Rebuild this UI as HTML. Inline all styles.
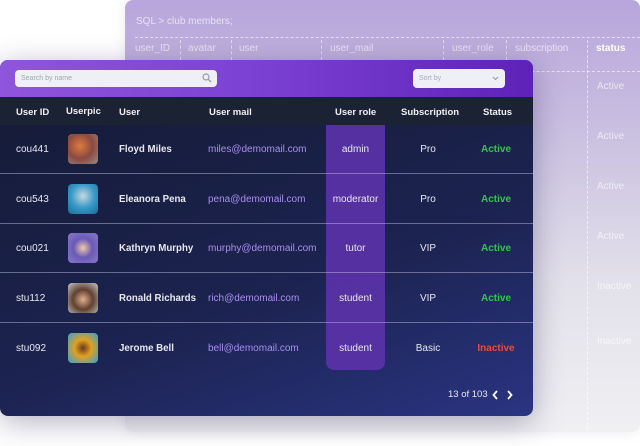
<!DOCTYPE html>
<html><head><style>
*{margin:0;padding:0;box-sizing:border-box}
body{width:640px;height:446px;background:#fff;position:relative;overflow:hidden;font-family:"Liberation Sans",sans-serif}
.bg{position:absolute;left:125px;top:0;width:515px;height:432px;border-radius:8px;background:linear-gradient(180deg,#b8a5dc 0%,#c9bfe0 30%,#e2e0ea 65%,#f0f0f3 100%);box-shadow:0 0 12px rgba(120,110,150,.15)}
.bg .t{position:absolute;font-size:10px;color:rgba(255,255,255,.65)}
.dash{position:absolute;left:10px;right:0;border-top:1px dashed rgba(255,255,255,.6)}
.vd{position:absolute;border-left:1px dashed rgba(255,255,255,.6)}
.card{position:absolute;left:0;top:60px;width:533px;height:356px;border-radius:8px;overflow:hidden;background:linear-gradient(160deg,#141a33 0%,#1c2350 60%,#2a3482 100%);box-shadow:0 6px 30px rgba(40,30,80,.35)}
.top{height:37px;background:linear-gradient(90deg,#8f55dc,#7a40d2 50%,#5d22b8)}
.search{position:absolute;left:15px;top:10px;width:202px;height:17px;background:#eef0f6;border-radius:4px;font-size:7px;color:#9aa;padding:5px 6px;line-height:8px}
.sort{position:absolute;left:413px;top:9px;width:92px;height:19px;background:#eef0f6;border-radius:4px;font-size:7px;color:#aab;padding:6px 6px;line-height:8px}
.head{position:absolute;top:37px;left:0;width:533px;height:28px;background:#1a2234}
.role{position:absolute;left:326px;top:65px;width:59px;height:245px;background:#5a32a8;border-radius:0 0 8px 8px;opacity:.92}
.c{position:absolute;font-size:10px;color:#e8e8f0;white-space:nowrap}
.h{font-weight:bold;font-size:9.5px;color:#f0f0f5}
.b{font-weight:bold;font-size:9.7px}
.line{position:absolute;left:0;width:533px;height:1px;background:rgba(200,200,230,.45)}
.av{position:absolute;left:68px;width:30px;height:30px;border-radius:4px}
</style></head><body>
<div class="bg">
<div class="t" style="left:11px;top:16px">SQL &gt; club members;</div>
<div class="dash" style="top:37px"></div>
<div class="dash" style="top:71px"></div>
<div class="t" style="left:10px;top:43px">user_ID</div>
<div class="t" style="left:63px;top:43px">avatar</div>
<div class="t" style="left:114px;top:43px">user</div>
<div class="t" style="left:205px;top:43px">user_mail</div>
<div class="t" style="left:327px;top:43px">user_role</div>
<div class="t" style="left:390px;top:43px">subscription</div>
<div class="t" style="left:471px;top:43px;font-weight:bold;color:#fff">status</div>
<div class="vd" style="left:462px;top:40px;height:390px"></div>
<div class="vd" style="left:55px;top:40px;height:20px"></div>
<div class="vd" style="left:106px;top:40px;height:20px"></div>
<div class="vd" style="left:196px;top:40px;height:20px"></div>
<div class="vd" style="left:318px;top:40px;height:20px"></div>
<div class="vd" style="left:381px;top:40px;height:20px"></div>
<div class="t" style="left:472px;top:81px">Active</div>
<div class="t" style="left:472px;top:131px">Active</div>
<div class="t" style="left:472px;top:181px">Active</div>
<div class="t" style="left:472px;top:231px">Active</div>
<div class="t" style="left:472px;top:281px">Inactive</div>
<div class="t" style="left:472px;top:336px">Inactive</div>
</div>
<div class="card">
<div class="top"></div>
<div class="search">Search by name<svg style="position:absolute;right:5px;top:3px" width="10" height="10" viewBox="0 0 10 10"><circle cx="4" cy="4" r="3" fill="none" stroke="#99a" stroke-width="1.2"/><path d="M6.3 6.3L9 9" stroke="#99a" stroke-width="1.3"/></svg></div>
<div class="sort">Sort by<svg style="position:absolute;right:6px;top:7px" width="7" height="5" viewBox="0 0 7 5"><path d="M1 1l2.5 2.5L6 1" fill="none" stroke="#99a" stroke-width="1.1"/></svg></div>
<div class="head"></div>
<div class="role"></div>
<div class="c h" style="left:16px;top:47px">User ID</div>
<div class="c h" style="left:66px;top:46px">Userpic</div>
<div class="c h" style="left:119px;top:47px">User</div>
<div class="c h" style="left:209px;top:47px">User mail</div>
<div class="c h" style="left:335px;top:47px">User role</div>
<div class="c h" style="left:401px;top:47px">Subscription</div>
<div class="c h" style="left:483px;top:47px">Status</div>
<div class="line" style="top:113px"></div>
<div class="line" style="top:163px"></div>
<div class="line" style="top:212px"></div>
<div class="line" style="top:262px"></div>
</div>
<div style="position:absolute;left:0;top:0">
<div class="c" style="left:16px;top:144px">cou441</div>
<div class="c" style="left:16px;top:194px">cou543</div>
<div class="c" style="left:16px;top:243px">cou021</div>
<div class="c" style="left:16px;top:293px">stu112</div>
<div class="c" style="left:16px;top:343px">stu092</div>
<div class="av" style="top:134px;background:radial-gradient(circle at 40% 40%,#e07a40,#8a4a40 50%,#9a8a88)"></div>
<div class="av" style="top:184px;background:radial-gradient(circle at 50% 40%,#c8d8e0,#3a9ac8 50%,#1a6a9a)"></div>
<div class="av" style="top:233px;background:radial-gradient(circle at 50% 50%,#f0c8a8,#6a5ab8 45%,#8a7ac8)"></div>
<div class="av" style="top:283px;background:radial-gradient(circle at 50% 55%,#e0b090,#604030 45%,#c8c8c8)"></div>
<div class="av" style="top:333px;background:radial-gradient(circle at 50% 50%,#6a3a20,#e0a020 40%,#30a0d8)"></div>
<div class="c b" style="left:119px;top:144px">Floyd Miles</div>
<div class="c b" style="left:119px;top:194px">Eleanora Pena</div>
<div class="c b" style="left:119px;top:243px">Kathryn Murphy</div>
<div class="c b" style="left:119px;top:293px">Ronald Richards</div>
<div class="c b" style="left:119px;top:343px">Jerome Bell</div>
<div class="c" style="left:208px;top:144px;color:#a98ef0">miles@demomail.com</div>
<div class="c" style="left:208px;top:194px;color:#a98ef0">pena@demomail.com</div>
<div class="c" style="left:208px;top:243px;color:#a98ef0">murphy@demomail.com</div>
<div class="c" style="left:208px;top:293px;color:#a98ef0">rich@demomail.com</div>
<div class="c" style="left:208px;top:343px;color:#a98ef0">bell@demomail.com</div>
<div class="c" style="left:326px;width:59px;text-align:center;top:144px">admin</div>
<div class="c" style="left:326px;width:59px;text-align:center;top:194px">moderator</div>
<div class="c" style="left:326px;width:59px;text-align:center;top:243px">tutor</div>
<div class="c" style="left:326px;width:59px;text-align:center;top:293px">student</div>
<div class="c" style="left:326px;width:59px;text-align:center;top:343px">student</div>
<div class="c" style="left:398px;width:60px;text-align:center;top:144px">Pro</div>
<div class="c" style="left:398px;width:60px;text-align:center;top:194px">Pro</div>
<div class="c" style="left:398px;width:60px;text-align:center;top:243px">VIP</div>
<div class="c" style="left:398px;width:60px;text-align:center;top:293px">VIP</div>
<div class="c" style="left:398px;width:60px;text-align:center;top:343px">Basic</div>
<div class="c" style="left:466px;width:60px;text-align:center;top:144px;color:#2ec84a;font-weight:bold">Active</div>
<div class="c" style="left:466px;width:60px;text-align:center;top:194px;color:#2ec84a;font-weight:bold">Active</div>
<div class="c" style="left:466px;width:60px;text-align:center;top:243px;color:#2ec84a;font-weight:bold">Active</div>
<div class="c" style="left:466px;width:60px;text-align:center;top:293px;color:#2ec84a;font-weight:bold">Active</div>
<div class="c" style="left:466px;width:60px;text-align:center;top:343px;color:#f0483a;font-weight:bold">Inactive</div>
<div class="c" style="left:448px;top:389px;font-size:9.5px">13 of 103</div>
<svg style="position:absolute;left:492px;top:390px" width="24" height="10" viewBox="0 0 24 10"><path d="M5 1L1.5 5 5 9M16 1l3.5 4L16 9" fill="none" stroke="#fff" stroke-width="1.8"/></svg>
</div>
</body></html>
